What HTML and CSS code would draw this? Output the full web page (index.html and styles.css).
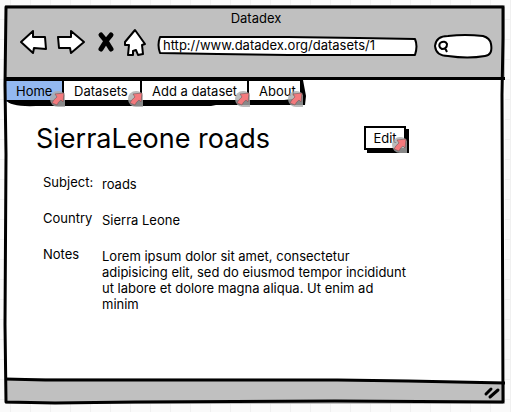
FILE: index.html
```html
<!DOCTYPE html>
<html lang="en">
<head>
<meta charset="utf-8">
<title>Datadex</title>
<link rel="stylesheet" href="styles.css">
</head>
<body>
<svg class="defs" aria-hidden="true">
  <symbol id="link-badge" viewBox="0 0 16 16">
    <path d="M8 0A8 8 0 0 0 8 16H15V4Q13 0 8 0Z" fill="#aaa" fill-opacity=".8"/>
    <path d="M5 3L14 2L13 11L11 9Q8 11 7 14L2 12Q4 8 7 6Z" fill="#f47a7d" stroke="#76585b" stroke-width=".6" stroke-linejoin="round"/>
  </symbol>
</svg>
<div class="window">
  <header class="chrome">
    <div class="title">Datadex</div>
    <div class="toolbar">
      <button class="tool back" aria-label="Back"><svg viewBox="0 0 30 28"><path d="M14 3L2 14L14 25L15 20L27 21L26 9L14 9Z"/></svg></button>
      <button class="tool forward" aria-label="Forward"><svg viewBox="0 0 30 28"><path d="M15 3L28 14L15 25L14 20L3 20L2 9L15 9Z"/></svg></button>
      <button class="tool stop" aria-label="Stop"><svg viewBox="0 0 18 22"><path class="thick" d="M4 4L9 10L14 18M14 4L9 10L4 18"/></svg></button>
      <button class="tool home" aria-label="Home page"><svg viewBox="0 0 24 30"><path d="M12 3L2 15L2 18L6 18L5 28L10 28L10 24L13 23L15 28L20 27L19 18L22 17Z"/></svg></button>
      <div class="address">
        <svg class="outline" viewBox="0 0 259 22" preserveAspectRatio="none" aria-hidden="true"><path d="M3 2L130 2L200 3L256 4Q259 11 256 20L130 20L60 19L3 18Q0 10 3 2Z"/></svg>
        <input type="text" aria-label="Address" value="http://www.datadex.org/datasets/1">
      </div>
      <div class="search">
        <svg class="outline" viewBox="0 0 60 26" preserveAspectRatio="none" aria-hidden="true"><path d="M2 13Q3 3 15 3Q32 1 50 3Q57 5 58 11Q60 22 52 23Q35 26 15 23Q3 23 2 13Z"/><path d="M7 10Q12 7 14 11Q14 16 9 16Q5 14 7 10M12 15L14 19"/></svg>
        <input type="text" aria-label="Search">
      </div>
    </div>
  </header>
  <nav class="tabs">
    <a class="tab active" href="#">Home<svg class="badge"><use href="#link-badge"/></svg></a>
    <a class="tab" href="#">Datasets<svg class="badge"><use href="#link-badge"/></svg></a>
    <a class="tab" href="#">Add a dataset<svg class="badge"><use href="#link-badge"/></svg></a>
    <a class="tab" href="#">About<svg class="badge"><use href="#link-badge"/></svg></a>
    <svg class="outline" viewBox="0 0 301 28" preserveAspectRatio="none" aria-hidden="true"><path class="solid" d="M0 20L240 20L278 20L295 18L294 0L297 0L300 16L299 25L210 25L205 26L30 26Q4 27 0 20Z"/></svg>
  </nav>
  <main class="page">
    <div class="heading">
      <h1>SierraLeone roads</h1>
      <button class="edit">Edit<svg class="badge"><use href="#link-badge"/></svg></button>
    </div>
    <dl class="fields">
      <dt>Subject:</dt><dd>roads</dd>
      <dt>Country</dt><dd>Sierra Leone</dd>
      <dt>Notes</dt><dd>Lorem ipsum dolor sit amet, consectetur adipisicing elit, sed do eiusmod tempor incididunt ut labore et dolore magna aliqua. Ut enim ad minim</dd>
    </dl>
  </main>
  <footer class="status">
    <svg class="edge" viewBox="0 0 496 8" preserveAspectRatio="none" aria-hidden="true"><path class="above" d="M0 0H496V5L330 2L0 1Z"/><path class="line" d="M0 2L40 3L330 3L400 4L496 6"/></svg>
    <svg class="grip" viewBox="0 0 18 14" aria-hidden="true"><path d="M3 8L8 3M7 11L15 4"/></svg>
  </footer>
  <svg class="frame" viewBox="0 0 500 400" preserveAspectRatio="none" aria-hidden="true"><path d="M1 2L498 2L498 33L497 90L498 398L330 397L130 398L50 399L1 398L0 320L1 150L0 80Z"/></svg>
</div>
</body>
</html>
```

FILE: styles.css
```css
* { box-sizing: border-box; }

body {
  margin: 0;
  padding: 5px 6px 8px 5px;
  font: 13px/16px Inter, sans-serif;
  color: #000;
  background-color: #fafafa;
  background-image:
    linear-gradient(#f0f0f0 1px, transparent 1px),
    linear-gradient(90deg, #f0f0f0 1px, transparent 1px);
  background-size: 20px 20px;
  background-position: 10px 19px;
}

.defs { position: absolute; width: 0; height: 0; }

button, input {
  font: inherit;
  color: inherit;
  padding: 0;
  border: 0;
  background: none;
}

.window {
  position: relative;
  display: flex;
  flex-direction: column;
  min-height: calc(100vh - 13px);
  background: #fff;
}

.frame {
  position: absolute;
  inset: 0;
  width: 100%;
  height: 100%;
  overflow: visible;
  fill: none;
  stroke: #000;
  stroke-width: 3;
  stroke-linejoin: round;
  pointer-events: none;
}

.chrome {
  height: 75px;
  padding: 5px 12px 0 14px;
  background: #c0c0c0;
  border-bottom: 3px solid #000;
}

.title { text-align: center; }

.toolbar {
  display: flex;
  align-items: center;
  height: 32px;
}

.tool svg {
  display: block;
  fill: #fff;
  stroke: #000;
  stroke-width: 2;
  stroke-linejoin: round;
}

.back svg, .forward svg { width: 30px; height: 28px; }
.forward { margin-left: 7px; }
.stop { margin: 0 8px 0 11px; }
.stop svg { width: 18px; height: 22px; }
.home svg { width: 24px; height: 30px; }
.tool .thick { stroke-width: 5; stroke-linecap: round; }

.address {
  position: relative;
  flex: 1;
  height: 22px;
  margin: 8px 15px 0 10px;
}

.search {
  position: relative;
  width: 60px;
  height: 26px;
  margin-top: 8px;
}

.address input, .search input {
  position: relative;
  display: block;
  width: 100%;
  height: 20px;
  padding-left: 6px;
}

.search input { padding-left: 18px; }

.outline {
  position: absolute;
  inset: 0;
  width: 100%;
  height: 100%;
  fill: #fff;
  stroke: #000;
  stroke-width: 2;
  stroke-linejoin: round;
  pointer-events: none;
}

.outline .solid { fill: #000; stroke: none; }

.tabs {
  position: relative;
  display: grid;
  grid-template-columns: 58px 78px 107px 53px;
  align-self: flex-start;
  height: 28px;
  margin-left: 1px;
  padding-right: 5px;
}

.tab {
  position: relative;
  height: 22px;
  padding: 2px 0 0 10px;
  color: #000;
  text-decoration: none;
  border-top: 1px solid #000;
  border-right: 2px solid #000;
}

.tab.active { background: #93b8f0; }

.badge {
  position: absolute;
  z-index: 1;
  right: -4px;
  bottom: -5px;
  width: 16px;
  height: 16px;
}

.page {
  flex: 1;
  padding: 14px 90px 24px 31px;
}

.heading {
  display: flex;
  justify-content: space-between;
  align-items: flex-start;
  margin-right: 9px;
}

h1 {
  margin: 0;
  font-size: 27px;
  font-weight: 400;
  line-height: 34px;
}

.edit {
  position: relative;
  width: 42px;
  height: 24px;
  margin-top: 4px;
  border: 2px solid #000;
  box-shadow: 3px 3px #000;
  background: #fff;
}

.fields {
  display: grid;
  grid-template-columns: 59px 1fr;
  row-gap: 18px;
  max-width: 365px;
  margin: 18px 0 0 7px;
}

.fields dd { margin: 2px 0 0; }

.status {
  position: relative;
  display: flex;
  justify-content: flex-end;
  height: 27px;
  padding: 9px 4px 0;
  background: #c0c0c0;
}

.edge {
  position: absolute;
  top: 0;
  left: 0;
  width: 100%;
  height: 8px;
}

.edge .above { fill: #fff; }
.edge .line { fill: none; stroke: #000; stroke-width: 3; }

.grip {
  width: 18px;
  height: 14px;
  stroke: #000;
  stroke-width: 3;
  stroke-linecap: round;
}
```
